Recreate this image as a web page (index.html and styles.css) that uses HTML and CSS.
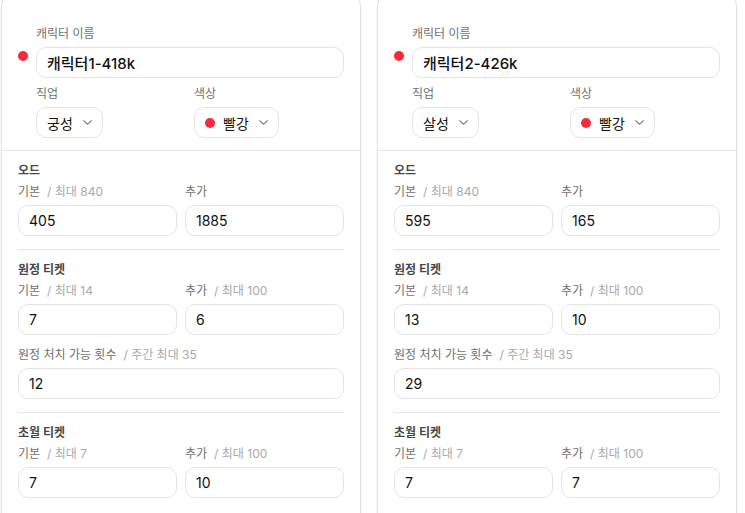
FILE: index.html
```html
<!DOCTYPE html>
<html lang="ko">
<head>
<meta charset="utf-8">
<link rel="stylesheet" href="styles.css">
</head>
<body>
<div class="board">
  <div class="card">
    <div class="card-head">
      <span class="dot big"></span>
      <div class="head-fields">
        <div class="field-label">캐릭터 이름</div>
        <div class="input name">캐릭터1-418k</div>
        <div class="row">
          <div>
            <div class="field-label">직업</div>
            <div class="select">궁성<svg class="chev" width="9" height="5" viewBox="0 0 9 5"><path d="M0.7 0.7 L4.5 4.2 L8.3 0.7" fill="none" stroke="#8a8a8a" stroke-width="1.2" stroke-linecap="round" stroke-linejoin="round"/></svg></div>
          </div>
          <div>
            <div class="field-label">색상</div>
            <div class="select"><span class="dot"></span>빨강<svg class="chev" width="9" height="5" viewBox="0 0 9 5"><path d="M0.7 0.7 L4.5 4.2 L8.3 0.7" fill="none" stroke="#8a8a8a" stroke-width="1.2" stroke-linecap="round" stroke-linejoin="round"/></svg></div>
          </div>
        </div>
      </div>
    </div>
    <div class="card-body">
      <div class="section">
        <div class="section-title">오드</div>
        <div class="row">
          <div><div class="field-label">기본<span class="hint">/ 최대 840</span></div><div class="input">405</div></div>
          <div><div class="field-label">추가</div><div class="input">1885</div></div>
        </div>
      </div>
      <div class="section">
        <div class="section-title">원정 티켓</div>
        <div class="row">
          <div><div class="field-label">기본<span class="hint">/ 최대 14</span></div><div class="input">7</div></div>
          <div><div class="field-label">추가<span class="hint">/ 최대 100</span></div><div class="input">6</div></div>
        </div>
        <div class="stack">
          <div class="field-label">원정 처치 가능 횟수<span class="hint">/ 주간 최대 35</span></div>
          <div class="input">12</div>
        </div>
      </div>
      <div class="section">
        <div class="section-title">초월 티켓</div>
        <div class="row">
          <div><div class="field-label">기본<span class="hint">/ 최대 7</span></div><div class="input">7</div></div>
          <div><div class="field-label">추가<span class="hint">/ 최대 100</span></div><div class="input">10</div></div>
        </div>
      </div>
    </div>
  </div>

  <div class="card">
    <div class="card-head">
      <span class="dot big"></span>
      <div class="head-fields">
        <div class="field-label">캐릭터 이름</div>
        <div class="input name">캐릭터2-426k</div>
        <div class="row">
          <div>
            <div class="field-label">직업</div>
            <div class="select">살성<svg class="chev" width="9" height="5" viewBox="0 0 9 5"><path d="M0.7 0.7 L4.5 4.2 L8.3 0.7" fill="none" stroke="#8a8a8a" stroke-width="1.2" stroke-linecap="round" stroke-linejoin="round"/></svg></div>
          </div>
          <div>
            <div class="field-label">색상</div>
            <div class="select"><span class="dot"></span>빨강<svg class="chev" width="9" height="5" viewBox="0 0 9 5"><path d="M0.7 0.7 L4.5 4.2 L8.3 0.7" fill="none" stroke="#8a8a8a" stroke-width="1.2" stroke-linecap="round" stroke-linejoin="round"/></svg></div>
          </div>
        </div>
      </div>
    </div>
    <div class="card-body">
      <div class="section">
        <div class="section-title">오드</div>
        <div class="row">
          <div><div class="field-label">기본<span class="hint">/ 최대 840</span></div><div class="input">595</div></div>
          <div><div class="field-label">추가</div><div class="input">165</div></div>
        </div>
      </div>
      <div class="section">
        <div class="section-title">원정 티켓</div>
        <div class="row">
          <div><div class="field-label">기본<span class="hint">/ 최대 14</span></div><div class="input">13</div></div>
          <div><div class="field-label">추가<span class="hint">/ 최대 100</span></div><div class="input">10</div></div>
        </div>
        <div class="stack">
          <div class="field-label">원정 처치 가능 횟수<span class="hint">/ 주간 최대 35</span></div>
          <div class="input">29</div>
        </div>
      </div>
      <div class="section">
        <div class="section-title">초월 티켓</div>
        <div class="row">
          <div><div class="field-label">기본<span class="hint">/ 최대 7</span></div><div class="input">7</div></div>
          <div><div class="field-label">추가<span class="hint">/ 최대 100</span></div><div class="input">7</div></div>
        </div>
      </div>
    </div>
  </div>
</div>
</body>
</html>
```

FILE: styles.css
```css
* { box-sizing: border-box; }
html, body { margin: 0; background: #ffffff; }
body {
  font-family: "Inter", "Noto Sans CJK KR", "Noto Sans", sans-serif;
  color: #111111;
  overflow: hidden;
}
.board {
  display: grid;
  grid-template-columns: 1fr 1fr;
  gap: 16px;
  padding: 0 8px 0 1px;
  margin-top: -10px;
}
.card {
  border: 1px solid #e3e3e3;
  border-radius: 16px;
  background: #fff;
  box-shadow: 0 1px 3px rgba(0,0,0,0.06);
  min-height: 560px;
}
.card-head {
  display: flex;
  gap: 8px;
  align-items: flex-start;
  padding: 35px 16px 12px 16px;
  border-bottom: 1px solid #e6e6e6;
}
.dot {
  display: inline-block;
  width: 10px;
  height: 10px;
  border-radius: 50%;
  background: #f62a3a;
  flex: none;
}
.dot.big { margin-top: 25px; }
.head-fields { flex: 1; min-width: 0; }
.field-label {
  font-size: 12px;
  line-height: 16px;
  color: #6f6f6f;
  margin-bottom: 5px;
  white-space: nowrap;
}
.hint {
  color: #a9a9a9;
  margin-left: 7px;
}
.input {
  height: 31px;
  border: 1px solid #e4e4e4;
  border-radius: 10px;
  padding: 0 10px;
  display: flex;
  align-items: center;
  font-size: 14px;
  color: #111;
}
.input.name {
  font-size: 15px;
  font-weight: 500;
  margin-bottom: 8px;
}
.row {
  display: grid;
  grid-template-columns: 1fr 1fr;
  gap: 8px;
}
.select {
  display: inline-flex;
  align-items: center;
  height: 31px;
  border: 1px solid #e4e4e4;
  border-radius: 10px;
  padding: 0 10px 0 10px;
  font-size: 14px;
  color: #111;
}
.select .dot { margin-right: 8px; }
.chev { margin-left: 10px; }
.card-body { padding: 0 16px; }
.section { padding: 12px 0 13px; }
.section + .section { border-top: 1px solid #e6e6e6; }
.section-title {
  font-size: 12px;
  line-height: 16px;
  font-weight: 700;
  color: #474747;
  margin-bottom: 5px;
}
.stack { margin-top: 12px; }
```
